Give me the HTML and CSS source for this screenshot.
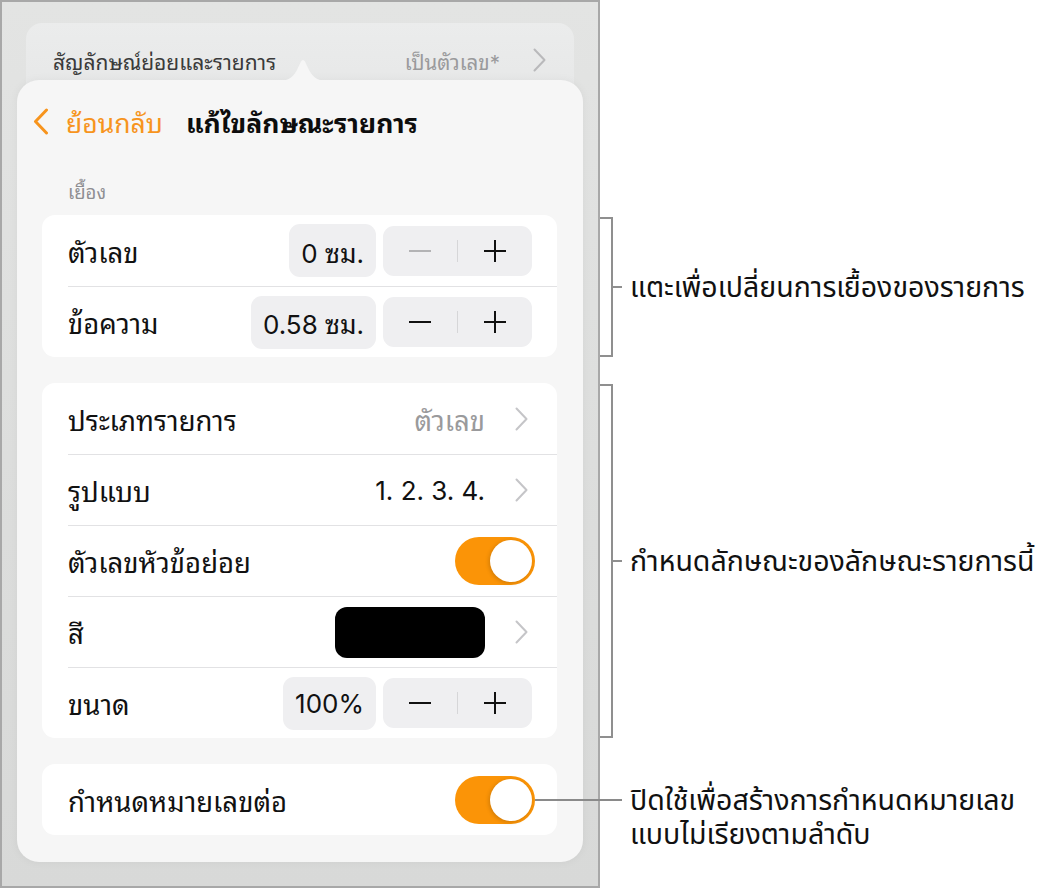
FILE: index.html
```html
<!DOCTYPE html>
<html lang="th">
<head>
<meta charset="utf-8">
<title>แก้ไขลักษณะรายการ</title>
<link rel="stylesheet" href="styles.css">
</head>
<body>
<div class="page">
  <div class="device">
    <div class="topcard">
      <span class="topcard-title">สัญลักษณ์ย่อยและรายการ</span>
      <span class="topcard-value">เป็นตัวเลข*</span>
      <svg class="chev chev-top" viewBox="0 0 13 24" width="13" height="24"><path d="M1.5 1.5 L11.5 12 L1.5 22.5" fill="none" stroke="#b9b9bb" stroke-width="2" stroke-linecap="round" stroke-linejoin="round"/></svg>
    </div>
    <div class="panel">
      <svg class="arrow" viewBox="0 0 56 22" width="56" height="22"><path d="M0 22 C12 22 17 20 22 11 C25 5 26 1 28 1 C30 1 31 5 34 11 C39 20 44 22 56 22 Z" fill="#f6f6f6"/></svg>
      <div class="navbar">
        <svg class="back-chev" viewBox="0 0 16 27" width="16" height="27"><path d="M13.5 2 L2.5 13.5 L13.5 25" fill="none" stroke="#f7941d" stroke-width="3" stroke-linecap="round" stroke-linejoin="round"/></svg>
        <span class="back-text">ย้อนกลับ</span>
        <span class="nav-title">แก้ไขลักษณะรายการ</span>
      </div>
      <div class="section-label">เยื้อง</div>
      <div class="group">
        <div class="row row-step">
          <span class="row-label">ตัวเลข</span>
          <span class="pill">0 ซม.</span>
          <div class="stepper">
            <span class="step-btn"><svg viewBox="0 0 22 22" width="22" height="22"><path d="M0 11 H22" stroke="#b3b3b5" stroke-width="2"/></svg></span>
            <span class="step-div"></span>
            <span class="step-btn"><svg viewBox="0 0 22 22" width="22" height="22"><path d="M0 11 H22 M11 0 V22" stroke="#111" stroke-width="2"/></svg></span>
          </div>
        </div>
        <div class="row row-step">
          <span class="row-label">ข้อความ</span>
          <span class="pill">0.58 ซม.</span>
          <div class="stepper">
            <span class="step-btn"><svg viewBox="0 0 22 22" width="22" height="22"><path d="M0 11 H22" stroke="#111" stroke-width="2"/></svg></span>
            <span class="step-div"></span>
            <span class="step-btn"><svg viewBox="0 0 22 22" width="22" height="22"><path d="M0 11 H22 M11 0 V22" stroke="#111" stroke-width="2"/></svg></span>
          </div>
        </div>
      </div>
      <div class="group">
        <div class="row row-nav">
          <span class="row-label">ประเภทรายการ</span>
          <span class="row-value muted">ตัวเลข</span>
          <svg class="chev" viewBox="0 0 13 24" width="13" height="24"><path d="M1.5 1.5 L11.5 12 L1.5 22.5" fill="none" stroke="#c5c5c8" stroke-width="2" stroke-linecap="round" stroke-linejoin="round"/></svg>
        </div>
        <div class="row row-nav">
          <span class="row-label">รูปแบบ</span>
          <span class="row-value num">1. 2. 3. 4.</span>
          <svg class="chev" viewBox="0 0 13 24" width="13" height="24"><path d="M1.5 1.5 L11.5 12 L1.5 22.5" fill="none" stroke="#c5c5c8" stroke-width="2" stroke-linecap="round" stroke-linejoin="round"/></svg>
        </div>
        <div class="row row-toggle">
          <span class="row-label">ตัวเลขหัวข้อย่อย</span>
          <span class="toggle"><span class="knob"></span></span>
        </div>
        <div class="row row-nav">
          <span class="row-label">สี</span>
          <span class="swatch"></span>
          <svg class="chev" viewBox="0 0 13 24" width="13" height="24"><path d="M1.5 1.5 L11.5 12 L1.5 22.5" fill="none" stroke="#c5c5c8" stroke-width="2" stroke-linecap="round" stroke-linejoin="round"/></svg>
        </div>
        <div class="row row-step">
          <span class="row-label">ขนาด</span>
          <span class="pill">100%</span>
          <div class="stepper">
            <span class="step-btn"><svg viewBox="0 0 22 22" width="22" height="22"><path d="M0 11 H22" stroke="#111" stroke-width="2"/></svg></span>
            <span class="step-div"></span>
            <span class="step-btn"><svg viewBox="0 0 22 22" width="22" height="22"><path d="M0 11 H22 M11 0 V22" stroke="#111" stroke-width="2"/></svg></span>
          </div>
        </div>
      </div>
      <div class="group">
        <div class="row row-toggle">
          <span class="row-label">กำหนดหมายเลขต่อ</span>
          <span class="toggle"><span class="knob"></span></span>
        </div>
      </div>
    </div>
  </div>
  <div class="notes">
    <div class="note note-a">
      <span class="bracket"></span>
      <span class="tick"></span>
      <span class="note-text">แตะเพื่อเปลี่ยนการเยื้องของรายการ</span>
    </div>
    <div class="note note-b">
      <span class="bracket"></span>
      <span class="tick"></span>
      <span class="note-text">กำหนดลักษณะของลักษณะรายการนี้</span>
    </div>
    <div class="note note-c">
      <span class="leader"></span>
      <span class="note-text">ปิดใช้เพื่อสร้างการกำหนดหมายเลข<br>แบบไม่เรียงตามลำดับ</span>
    </div>
  </div>
</div>
</body>
</html>
```
FILE: styles.css
```css
* { box-sizing: border-box; }
html, body { margin: 0; padding: 0; background: #fff; }
body {
  font-family: "Inter", "Noto Sans Thai Looped", "Loma", "Garuda", "Noto Sans Thai", "Noto Sans", sans-serif;
  color: #111;
}
.page { display: flex; align-items: flex-start; }

.device {
  width: 600px;
  height: 888px;
  border: 2px solid #a8a8a8;
  background: linear-gradient(180deg, #e3e4e3 0%, #dcdddc 60%, #d8d9d8 100%);
  padding: 21px 15px 0 15px;
  flex: none;
}

.topcard {
  margin: 0 9px;
  height: 80px;
  border-radius: 16px;
  background: linear-gradient(180deg, #ebecec, #e6e7e7);
  display: flex;
  align-items: center;
  padding: 20px 28px 26px 27px;
}
.topcard-title { font-size: 21px; color: #3a3a3a; flex: 1; white-space: nowrap; }
.topcard-value { font-size: 20.5px; color: #9a9a9c; margin-right: 33px; white-space: nowrap; }
.chev-top { flex: none; }

.panel {
  position: relative;
  margin-top: -23px;
  background: #f6f6f6;
  border-radius: 22px;
  height: 782px;
  padding: 20px 26px 0 25px;
  box-shadow: 0 0 10px rgba(0,0,0,0.05);
}
.arrow { position: absolute; left: 258px; top: -21px; }

.navbar {
  height: 42px;
  display: flex;
  align-items: center;
  margin-left: -9px;
}
.back-chev { flex: none; }
.back-text { color: #f7941d; font-size: 26.5px; margin-left: 17px; white-space: nowrap; }
.nav-title { font-size: 26.5px; font-weight: 700; margin-left: 23px; color: #0d0d0d; white-space: nowrap; }

.section-label {
  margin: 40px 0 13px 26px;
  font-size: 18.5px;
  line-height: 20px;
  color: #8e8e92;
}

.group {
  background: #fff;
  border-radius: 13px;
  margin-bottom: 26px;
  overflow: hidden;
}
.row {
  height: 71px;
  display: flex;
  align-items: center;
  margin-left: 26px;
  border-top: 1.5px solid #e2e2e4;
}
.row:first-child { border-top: none; }
.row-label { flex: 1; font-size: 27.5px; color: #111; white-space: nowrap; }
.row-step { padding-right: 25px; }
.row-nav { padding-right: 29px; }
.row-toggle { padding-right: 22px; }

.pill {
  height: 53px;
  display: flex;
  align-items: center;
  padding: 0 12px;
  border-radius: 11px;
  background: #efeff1;
  font-size: 26px;
  color: #111;
  white-space: nowrap;
}
.stepper {
  margin-left: 7px;
  width: 149px;
  height: 50px;
  border-radius: 11px;
  background: #efeff1;
  display: flex;
  align-items: center;
  flex: none;
}
.step-btn { flex: 1; display: flex; justify-content: center; align-items: center; }
.step-div { width: 1.5px; height: 22px; background: #d6d6d8; }

.row-value { font-size: 27.5px; margin-right: 30px; color: #111; white-space: nowrap; }
.row-value.num { font-size: 26px; }
.row-value.muted { color: #9a9a9c; }
.chev { flex: none; }

.swatch {
  width: 150px;
  height: 51px;
  border-radius: 12px;
  background: #000;
  margin-right: 30px;
}

.toggle {
  width: 80px;
  height: 48px;
  border-radius: 24px;
  background: #fb9407;
  display: flex;
  align-items: center;
  justify-content: flex-end;
  padding-right: 3px;
}
.knob {
  width: 42px;
  height: 42px;
  border-radius: 50%;
  background: #fff;
  box-shadow: -1px 1px 4px rgba(0,0,0,0.18);
}

.notes {
  padding-top: 217px;
  display: flex;
  flex-direction: column;
  font-family: "Inter", "Noto Sans Thai", "Noto Sans Thai UI", "Noto Sans", sans-serif;
}
.note { display: flex; align-items: center; }
.bracket {
  width: 13px;
  align-self: stretch;
  border: 2px solid #8f8f8f;
  border-left: none;
}
.tick { width: 9px; height: 2px; background: #8f8f8f; }
.note-text { margin-left: 8px; font-size: 28.5px; color: #111; line-height: 34px; white-space: nowrap; }
.note-a { height: 140px; }
.note-b { height: 354px; margin-top: 27px; }
.note-c { margin-top: 45px; align-items: flex-start; }
.leader {
  position: relative;
  width: 22px;
  height: 2px;
  margin-top: 16px;
  background: #8a8a8a;
}
.leader::before {
  content: "";
  position: absolute;
  right: 100%;
  top: 0;
  width: 65px;
  height: 2px;
  background: #8a8a8a;
}
```
